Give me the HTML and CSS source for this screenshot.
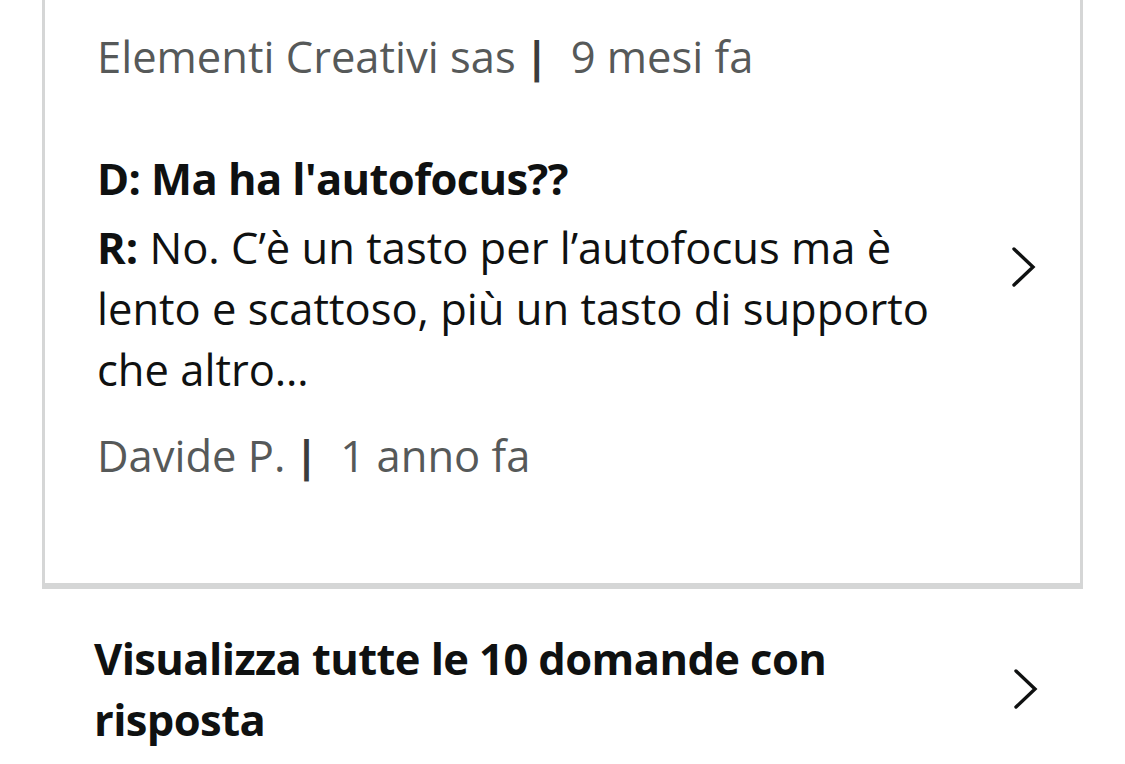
FILE: index.html
```html
<!DOCTYPE html>
<html lang="it">
<head>
<meta charset="utf-8">
<link rel="stylesheet" href="styles.css">
</head>
<body>
<div class="card">
  <div class="meta meta-top">Elementi Creativi sas<span class="sep">|</span>9 mesi fa</div>
  <div class="qa">
    <div class="qa-text">
      <div class="question">D: Ma ha l'autofocus??</div>
      <p class="answer"><strong class="answer-label">R:</strong> No. C’è un tasto per l’autofocus ma è lento e scattoso, più un tasto di supporto che altro…</p>
      <div class="meta meta-bottom">Davide P.<span class="sep">|</span>1 anno fa</div>
    </div>
    <svg class="chev chev-qa" viewBox="0 0 24 40" width="24" height="40"><path d="M2 2 L21 20 L2 38" fill="none" stroke="#0f1111" stroke-width="3.4" stroke-linecap="round" stroke-linejoin="miter"/></svg>
  </div>
</div>
<div class="all">
  <div class="all-text">Visualizza tutte le 10 domande con risposta</div>
  <svg class="chev" viewBox="0 0 24 40" width="24" height="40"><path d="M2 2 L21 20 L2 38" fill="none" stroke="#0f1111" stroke-width="3.4" stroke-linecap="round" stroke-linejoin="miter"/></svg>
</div>
</body>
</html>
```
FILE: styles.css
```css
html, body {
  margin: 0;
  padding: 0;
  background: #fff;
}
body {
  font-family: "Open Sans", "Noto Sans", sans-serif;
  font-size: 43.5px;
  line-height: 61px;
  color: #0f1111;
  width: 1125px;
  height: 764px;
  overflow: hidden;
}
.card {
  margin-left: 42px;
  border-left: 3px solid #d5d6d6;
  border-right: 3px solid #d5d6d6;
  border-bottom: 6px solid #d5d6d6;
  padding: 26px 0 97px 52px;
  box-sizing: content-box;
  width: 983px;
}
.meta {
  color: #565959;
}
.sep {
  display: inline-block;
  margin: 0 22px 0 9px;
  font-weight: 700;
  color: #3a3c3c;
}
.qa {
  display: flex;
  align-items: flex-start;
  margin-top: 61px;
}
.qa-text {
  width: 860px;
}
.question {
  font-weight: 700;
  letter-spacing: -0.6px;
}
.answer {
  margin: 8px 0 0;
}
.answer-label {
  font-weight: 700;
}
.meta-bottom {
  margin-top: 25px;
}
.chev {
  flex: none;
  display: block;
}
.chev-qa {
  margin-top: 99px;
  margin-left: 55px;
}
.all {
  display: flex;
  align-items: center;
  margin-top: 39px;
  padding-left: 94px;
}
.all-text {
  font-weight: 700;
  width: 860px;
  letter-spacing: -0.6px;
}
.all .chev {
  margin-left: 60px;
}
```
